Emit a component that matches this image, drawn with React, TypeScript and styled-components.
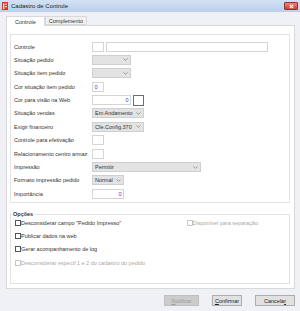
import React from "react"
import styled, { createGlobalStyle } from "styled-components"

const GlobalStyle = createGlobalStyle`
  html, body {
    margin: 0;
    padding: 0;
    background: #f0f0f7;
  }
  body {
    font-family: "Liberation Sans", Arial, sans-serif;
    font-size: 5.5px;
    color: #333;
  }
`

type Field =
  | { kind: "pair" }
  | { kind: "select"; width: number; value?: string }
  | { kind: "input"; width: number; value?: string; align?: "left" | "right"; color?: boolean }

const rows: { label: string; field: Field }[] = [
  { label: "Controle", field: { kind: "pair" } },
  { label: "Situação pedido", field: { kind: "select", width: 39 } },
  { label: "Situação item pedido", field: { kind: "select", width: 39 } },
  { label: "Cor situação item pedido", field: { kind: "input", width: 12, value: "0", align: "left" } },
  { label: "Cor para visão na Web", field: { kind: "input", width: 39, value: "0", align: "right", color: true } },
  { label: "Situação vendas", field: { kind: "select", width: 52, value: "Em Andamento" } },
  { label: "Exigir financeiro", field: { kind: "select", width: 52, value: "Cfe.Config.370" } },
  { label: "Controle para efetivação", field: { kind: "input", width: 12 } },
  { label: "Relacionamento centro armaz.", field: { kind: "input", width: 12 } },
  { label: "Impressão", field: { kind: "select", width: 109, value: "Permitir" } },
  { label: "Formato impressão pedido", field: { kind: "select", width: 32, value: "Normal" } },
  { label: "Importância", field: { kind: "input", width: 32, value: "0", align: "right" } },
]

const options = [
  { label: "Desconsiderar campo \"Pedido Impresso\"", disabled: false },
  { label: "Publicar dados na web", disabled: false },
  { label: "Gerar acompanhamento de log", disabled: false },
  { label: "Desconsiderar especif 1 e 2 do cadastro do pedido", disabled: true },
]

const Chevron = () => (
  <svg width="5" height="3" viewBox="0 0 5 3">
    <path d="M0.5 0.5 L2.5 2.3 L4.5 0.5" fill="none" stroke="#7a7a7a" strokeWidth="0.7" />
  </svg>
)

const renderField = (field: Field) => {
  if (field.kind === "pair") {
    return (
      <S.Inline>
        <S.Input $width={12} />
        <S.Input $width={162} />
      </S.Inline>
    )
  }
  if (field.kind === "select") {
    return (
      <S.Select $width={field.width}>
        <span>{field.value}</span>
        <Chevron />
      </S.Select>
    )
  }
  return (
    <S.Inline>
      <S.Input $width={field.width} $align={field.align}>
        {field.value}
      </S.Input>
      {field.color && <S.ColorBox />}
    </S.Inline>
  )
}

export default function App() {
  return (
    <S.Window>
      <GlobalStyle />
      <S.TitleBar>
        <S.TitleLeft>
          <svg width="6" height="8" viewBox="0 0 6 8">
            <rect x="0" y="0" width="6" height="8" fill="#d8352a" />
            <rect x="1" y="1.5" width="1.3" height="5.5" fill="#fff" />
            <rect x="3.2" y="1.5" width="1.6" height="1.2" fill="#fff" />
            <rect x="3.2" y="4" width="1.6" height="1.2" fill="#fff" />
          </svg>
          <span>Cadastro de Controle</span>
        </S.TitleLeft>
        <S.CloseButton>
          <svg width="5" height="5" viewBox="0 0 5 5">
            <path d="M0.8 0.8 L4.2 4.2 M4.2 0.8 L0.8 4.2" stroke="#fff" strokeWidth="1.1" />
          </svg>
        </S.CloseButton>
      </S.TitleBar>

      <S.Body>
        <S.Tabs>
          <S.Tab $active>Controle</S.Tab>
          <S.Tab>Complemento</S.Tab>
        </S.Tabs>
        <S.Panel>
          <S.Group>
            {rows.map((row) => (
              <React.Fragment key={row.label}>
                <S.Label>{row.label}</S.Label>
                {renderField(row.field)}
              </React.Fragment>
            ))}
          </S.Group>
          <S.OptionsGroup>
            <S.Legend>Opções</S.Legend>
            <S.OptionsGrid>
              {options.map((opt, i) => (
                <S.CheckRow key={opt.label} $disabled={opt.disabled}>
                  <S.Box $disabled={opt.disabled} />
                  <span>{opt.label}</span>
                  {i === 0 && (
                    <S.SideCheck>
                      <S.Box $disabled />
                      <span>Disponível para separação</span>
                    </S.SideCheck>
                  )}
                </S.CheckRow>
              ))}
            </S.OptionsGrid>
          </S.OptionsGroup>
        </S.Panel>
        <S.Buttons>
          <S.Button $width={35} disabled>
            <u>N</u>otificar
          </S.Button>
          <S.Button $width={30}>
            <u>C</u>onfirmar
          </S.Button>
          <S.Button $width={40}>
            Cancela<u>r</u>
          </S.Button>
        </S.Buttons>
      </S.Body>
    </S.Window>
  )
}

const S = {
  Window: styled.div`
    width: 300px;
    height: 311px;
    display: flex;
    flex-direction: column;
    background: #f0f0f7;
    overflow: hidden;
  `,

  TitleBar: styled.div`
    height: 13px;
    display: flex;
    align-items: center;
    justify-content: space-between;
    padding: 0 2px 0 2px;
    background: linear-gradient(#d3e2f4, #b8cfeb);
    font-family: "Liberation Sans", Arial, sans-serif;
    font-size: 6px;
    color: #222;
    box-sizing: border-box;
  `,

  TitleLeft: styled.div`
    display: flex;
    align-items: center;
    gap: 3px;
  `,

  CloseButton: styled.div`
    width: 14px;
    height: 8px;
    display: flex;
    align-items: center;
    justify-content: center;
    background: linear-gradient(#e08a7c, #c5443a);
    border: 1px solid #9b3128;
    border-radius: 1px;
    box-sizing: border-box;
  `,

  Body: styled.div`
    flex: 1;
    display: flex;
    flex-direction: column;
    padding: 3px 5px 5px 6px;
  `,

  Tabs: styled.div`
    display: flex;
    align-items: flex-end;
    height: 10px;
  `,

  Tab: styled.div<{ $active?: boolean }>`
    height: ${(p) => (p.$active ? "10px" : "9px")};
    padding: 0 ${(p) => (p.$active ? "8px" : "3px")};
    display: flex;
    align-items: center;
    background: ${(p) => (p.$active ? "#fff" : "#f0f0f0")};
    border: 1px solid #d9d9d9;
    border-bottom: ${(p) => (p.$active ? "none" : "1px solid #d9d9d9")};
    box-sizing: border-box;
    margin-bottom: ${(p) => (p.$active ? "-1px" : "0")};
    position: relative;
    z-index: ${(p) => (p.$active ? 1 : 0)};
  `,

  Panel: styled.div`
    height: 264px;
    background: #fff;
    border: 1px solid #d9d9d9;
    box-sizing: border-box;
    padding: 8px 4px 4px 3px;
    display: flex;
    flex-direction: column;
    gap: 8px;
  `,

  Group: styled.div`
    height: 170px;
    border: 1px solid #e3e3e3;
    box-sizing: border-box;
    padding: 6px 0 0 3px;
    display: grid;
    grid-template-columns: 78px 1fr;
    grid-auto-rows: 11px;
    row-gap: 2.4px;
    align-items: center;
  `,

  Label: styled.div`
    white-space: nowrap;
    color: #333;
  `,

  Inline: styled.div`
    display: flex;
    align-items: center;
    gap: 2px;
  `,

  Input: styled.div<{ $width: number; $align?: "left" | "right" }>`
    width: ${(p) => p.$width}px;
    height: 10px;
    border: 1px solid #d5d5d5;
    background: #fff;
    box-sizing: border-box;
    display: flex;
    align-items: center;
    justify-content: ${(p) => (p.$align === "right" ? "flex-end" : "flex-start")};
    padding: 0 1.5px;
    color: #3b3bd0;
  `,

  ColorBox: styled.div`
    width: 11px;
    height: 11px;
    border: 1px solid #6e6e6e;
    background: #fff;
    box-sizing: border-box;
  `,

  Select: styled.div<{ $width: number }>`
    width: ${(p) => p.$width}px;
    height: 10px;
    border: 1px solid #cfcfcf;
    background: #e3e3e3;
    box-sizing: border-box;
    display: flex;
    align-items: center;
    justify-content: space-between;
    padding: 0 2px 0 2px;
    color: #333;
    white-space: nowrap;
  `,

  OptionsGroup: styled.fieldset`
    margin: 0;
    height: 73px;
    border: 1px solid #e3e3e3;
    box-sizing: border-box;
    padding: 2px 0 0 4px;
  `,

  Legend: styled.legend`
    font-weight: bold;
    padding: 0 1px;
    margin-left: -3px;
    color: #333;
    line-height: 6px;
  `,

  OptionsGrid: styled.div`
    display: flex;
    flex-direction: column;
    gap: 6.3px;
  `,

  CheckRow: styled.div<{ $disabled?: boolean }>`
    display: flex;
    align-items: center;
    height: 7px;
    color: ${(p) => (p.$disabled ? "#a8a8a8" : "#333")};
  `,

  Box: styled.div<{ $disabled?: boolean }>`
    width: 6px;
    height: 6px;
    border: 1px solid ${(p) => (p.$disabled ? "#c8c8c8" : "#555")};
    background: #fff;
    box-sizing: border-box;
    flex: none;
  `,

  SideCheck: styled.div`
    display: flex;
    align-items: center;
    margin-left: auto;
    margin-right: 31px;
    color: #a8a8a8;
  `,

  Buttons: styled.div`
    display: flex;
    justify-content: flex-end;
    gap: 13px;
    margin-top: 6px;
  `,

  Button: styled.button<{ $width: number }>`
    width: ${(p) => p.$width}px;
    height: 11px;
    padding: 0;
    font-family: "Liberation Sans", Arial, sans-serif;
    font-size: 5.5px;
    color: #222;
    background: #e1e1e1;
    border: 1px solid #adadad;
    box-sizing: border-box;

    &:disabled {
      background: #cccccc;
      border-color: #bfbfbf;
      color: #9a9a9a;
    }
  `,
}
